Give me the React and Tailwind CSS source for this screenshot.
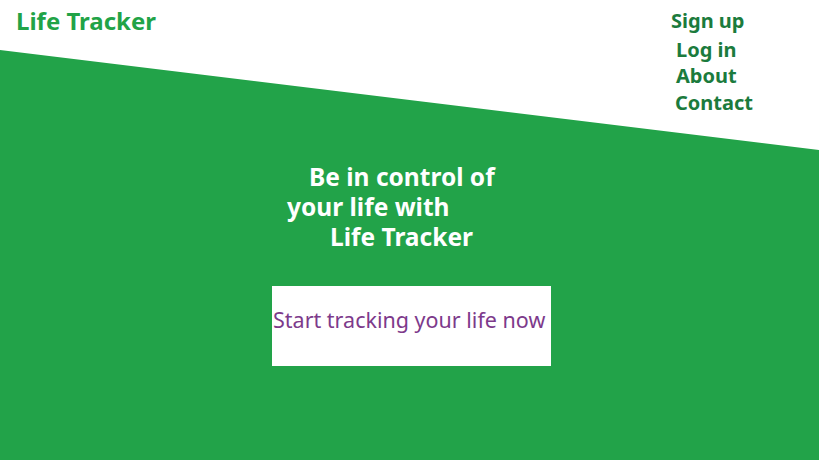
export default function App() {
  return (
    <div className="relative w-[819px] h-[460px] overflow-hidden bg-white font-['Noto_Sans',sans-serif]">
      {/* green slanted backdrop */}
      <div className="absolute inset-0 bg-[#22a349] [clip-path:polygon(0_50px,100%_150px,100%_100%,0_100%)]"></div>

      <div className="relative flex justify-between">
        <h1 className="pl-4 pt-[5px] text-[24px] font-bold leading-[32px] text-[#21a347]">Life Tracker</h1>
        <nav className="flex flex-col pr-[66px] pt-[8px] text-[20px] font-bold leading-[26px] text-[#1b7b3d]">
          <a className="mb-[3px]">Sign up</a>
          <a className="pl-[5px]">Log in</a>
          <a className="pl-[5px]">About</a>
          <a className="pl-[4px] pt-[1px]">Contact</a>
        </nav>
      </div>

      <div className="relative mt-[46px] flex flex-col items-start pl-[287px] text-[24.5px] font-bold leading-[30px] text-white">
        <p className="pl-[22px]">Be in control of</p>
        <p>your life with</p>
        <p className="pl-[43px]">Life Tracker</p>
      </div>

      <div className="relative ml-[272px] mt-[34px] flex h-[80px] w-[279px] items-center bg-white pb-[12px] pl-[1px]">
        <span className="text-[21.5px] leading-none text-[#7d3a8b]">Start tracking your life now</span>
      </div>
    </div>
  )
}
